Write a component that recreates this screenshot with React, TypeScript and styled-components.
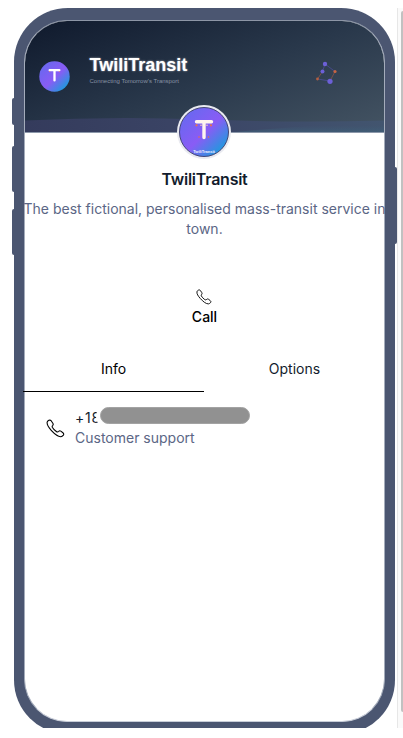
import React from "react";
import styled, { createGlobalStyle } from "styled-components";

const Global = createGlobalStyle`
  * { box-sizing: border-box; }
  body { margin: 0; background: #fff; font-family: Inter, "Liberation Sans", sans-serif; }
`;

const Page = styled.main`
  width: 403px;
  height: 738px;
  padding-top: 8px;
  display: flex;
  align-items: flex-start;
  overflow: hidden;
`;

const Stage = styled.div`
  position: relative;
  width: 397px;
  height: 720px;
  padding-left: 14px;
  flex: none;
  overflow: hidden;
`;

const SideButton = styled.span<{ $side: "left" | "right"; $top: number; $height: number }>`
  position: absolute;
  ${(p) => (p.$side === "left" ? "left: 12px; border-radius: 2px 0 0 2px;" : "right: 0; border-radius: 0 2px 2px 0;")}
  top: ${(p) => p.$top}px;
  width: 3px;
  height: ${(p) => p.$height}px;
  background: #4b5671;
`;

const Phone = styled.section`
  width: 381px;
  height: 726px;
  padding: 12px 10px;
  border-radius: 54px;
  background: #4b5671;
`;

const Screen = styled.div`
  width: 361px;
  height: 702px;
  border: 1px solid #a4acbb;
  border-top-color: #8d96a6;
  border-bottom-color: #c8cdd8;
  border-radius: 43px;
  background: #fff;
`;

const Banner = styled.header`
  position: relative;
  height: 112px;
  padding: 0 47px 0 14px;
  display: flex;
  align-items: flex-start;
  border-radius: 42px 42px 0 0;
  border-bottom: 1px solid #8c98aa;
  background: linear-gradient(160deg, #0f192c 0%, #29384b 52%, #445463 100%);
  overflow: hidden;
`;

const Wave = styled.svg`
  position: absolute;
  left: 0;
  bottom: 0;
`;

const SmallLogo = styled.svg`
  margin-top: 40px;
  flex: none;
`;

const BrandText = styled.div`
  position: relative;
  margin: 33px auto 0 19.5px;
  font-family: "Liberation Sans", Arial, sans-serif;
`;

const BrandName = styled.div`
  color: #fff;
  font-size: 18px;
  line-height: 23px;
  font-weight: 700;
  text-shadow: 0 0 2px rgba(255, 255, 255, 0.65);
`;

const Tagline = styled.div`
  color: #8793a5;
  font-size: 6px;
  line-height: 8px;
  white-space: nowrap;
`;

const Network = styled.svg`
  margin: 40px -1px 0 0;
  flex: none;
`;

const Profile = styled.div`
  position: relative;
  margin: -28px -1px 0;
  display: flex;
  flex-direction: column;
  align-items: center;
`;

const Avatar = styled.div`
  width: 54px;
  height: 54px;
  margin-right: 2px;
  padding: 2px;
  border-radius: 50%;
  background: #e9eaf0;
  svg { display: block; }
`;

const Name = styled.h1`
  margin: 8px 0 0;
  color: #121c2d;
  font-size: 16px;
  line-height: 24px;
  font-weight: 600;
  letter-spacing: -0.25px;
`;

const Description = styled.p`
  width: 364px;
  margin: 8px 0 0;
  color: #5b6685;
  font-size: 14px;
  line-height: 20px;
  text-align: center;
`;

const CallButton = styled.button`
  margin-top: 48px;
  padding: 0;
  display: flex;
  flex-direction: column;
  align-items: center;
  border: 0;
  background: none;
  color: #000;
  font: 500 14px/20px Inter, sans-serif;
`;

const CallIconSlot = styled.span`
  height: 20px;
  margin-right: 1px;
  display: flex;
  align-items: center;
`;

const Tabs = styled.nav`
  margin: 20px -1px 0;
  display: grid;
  grid-template-columns: 181px 181px;
  transform: translateX(-1px);
`;

const Tab = styled.button<{ $active?: boolean }>`
  height: 45px;
  padding: 0 0 1px;
  border: 0;
  border-bottom: 1px solid ${(p) => (p.$active ? "#000" : "transparent")};
  background: none;
  color: ${(p) => (p.$active ? "#000" : "#121c2d")};
  font: 400 14px/20px Inter, sans-serif;
`;

const Contact = styled.div`
  margin-top: 16px;
  padding-left: 20.5px;
  display: flex;
  align-items: center;
  gap: 10.5px;
`;

const ContactText = styled.div`
  font-size: 14px;
  line-height: 20px;
`;

const NumberLine = styled.div`
  height: 20px;
  display: flex;
  align-items: center;
  color: #121c2d;
`;

const Digits = styled.span`
  width: 24.5px;
  letter-spacing: 0.8px;
  white-space: nowrap;
`;

const Redaction = styled.span`
  width: 150px;
  height: 17px;
  margin-top: -5px;
  border: 1px solid #a3a3a3;
  border-radius: 9px;
  background: #919191;
  box-shadow: -1px 1px 0 3px #fff;
  z-index: 1;
`;

const Label = styled.div`
  color: #5b6685;
`;

const ScrollTrack = styled.aside`
  width: 6px;
  height: 720px;
  padding: 3px 0 0 3px;
  border-left: 1px solid #e7e7e7;
  background: #fafafa;
`;

const ScrollThumb = styled.div`
  height: 701px;
  border-radius: 3px 0 0 3px;
  background: #c1c1c1;
`;

function Gradient({ id }: { id: string }) {
  return (
    <linearGradient id={id} x1="0" y1="0" x2="1" y2="1">
      <stop offset="0.12" stopColor="#6968f0" />
      <stop offset="0.52" stopColor="#895cf5" />
      <stop offset="0.9" stopColor="#169fdc" />
    </linearGradient>
  );
}

function Handset({ size }: { size: number }) {
  return (
    <svg width={size} height={size} viewBox="0 0 20 20" fill="none" stroke="#000" strokeWidth="1.15" strokeLinejoin="round">
      <path d="M1.2 3.4C.8 6 2.5 8.7 5.5 12C9 15.8 12.5 18.7 15.6 18.6Q17 18.3 18.3 16.9Q19.2 15.7 17.8 14.5L15.6 12.8Q14.4 11.9 13.4 13Q12.2 14.2 10.9 13.2Q8 11 6.6 8.6Q6.2 7.6 7.2 6.6Q8 5.6 7.2 4.4L5.4 1.8Q4.4.7 3 1.4Q1.5 2.2 1.2 3.4Z" />
    </svg>
  );
}

export default function App() {
  return (
    <>
      <Global />
      <Page>
        <Stage>
          <SideButton $side="left" $top={90} $height={27} />
          <SideButton $side="left" $top={138} $height={46} />
          <SideButton $side="left" $top={201} $height={46} />
          <SideButton $side="right" $top={159} $height={77} />
          <Phone>
            <Screen>
              <Banner>
                <Wave width="359" height="16" viewBox="0 0 359 16">
                  <defs>
                    <linearGradient id="wave">
                      <stop stopColor="#343b5c" />
                      <stop offset="0.5" stopColor="#3b4566" />
                      <stop offset="1" stopColor="#42556f" />
                    </linearGradient>
                    <linearGradient id="shore" x1="0" y1="0" x2="0" y2="1">
                      <stop offset="0.3" stopColor="#3f5f78" stopOpacity="0" />
                      <stop offset="1" stopColor="#3f5f78" stopOpacity="0.7" />
                    </linearGradient>
                  </defs>
                  <path d="M0 4.5Q90 0 180 3.5T359 4.5V16H0Z" fill="url(#wave)" />
                  <path d="M210 16Q290 8 359 7V16Z" fill="url(#shore)" />
                </Wave>
                <SmallLogo width="31" height="31" viewBox="0 0 32 32">
                  <defs><Gradient id="small-logo" /></defs>
                  <circle cx="16" cy="16" r="15.7" fill="url(#small-logo)" />
                  <path d="M11 9.5H21M16 9.5V20" stroke="#fff" strokeWidth="2.4" strokeLinecap="round" />
                  <g fill="#f28a61"><circle cx="11" cy="10.8" r=".6" /><circle cx="21" cy="10.8" r=".6" /></g>
                </SmallLogo>
                <BrandText>
                  <BrandName>TwiliTransit</BrandName>
                  <Tagline>Connecting Tomorrow's Transport</Tagline>
                </BrandText>
                <Network width="22" height="24" viewBox="0 0 22 24">
                  <g fill="none" strokeWidth="1" opacity="0.6">
                    <path d="M9 3L19 10.5M9 3L6.5 10.5M1.5 18L14 20" stroke="#5550b0" />
                    <path d="M6.5 10.5L1.5 18M19 10.5L14 20" stroke="#a45b45" />
                  </g>
                  <g fill="#6c60d7"><circle cx="9" cy="3" r="2.2" /><circle cx="6.5" cy="10.5" r="2" /><circle cx="14" cy="20.3" r="2.6" /></g>
                  <circle cx="19" cy="10.5" r="1.6" fill="#c76543" /><circle cx="1.5" cy="18" r="1.4" fill="#b55f3f" />
                </Network>
              </Banner>
              <Profile>
                <Avatar>
                  <svg width="50" height="50" viewBox="0 0 50 50">
                    <defs><Gradient id="avatar" /></defs>
                    <circle cx="25" cy="25" r="24.5" fill="url(#avatar)" stroke="#454775" strokeWidth="1" />
                    <path d="M17.5 14.8H32.5M25 15V30.5" stroke="#fff5ee" strokeWidth="3.4" strokeLinecap="round" />
                    <g fill="#ef7046"><circle cx="17.5" cy="18.3" r="1.1" /><circle cx="32" cy="18.3" r="1.1" /><circle cx="20" cy="30" r=".8" /><circle cx="29.5" cy="30" r=".8" /></g>
                    <g fill="#ffd0b5"><circle cx="22" cy="18.3" r=".8" /><circle cx="28" cy="18.3" r=".8" /></g>
                    <text x="25" y="45.5" textAnchor="middle" fill="#eef0ff" fontFamily="Liberation Sans" fontWeight="700" fontSize="4">TwiliTransit</text>
                  </svg>
                </Avatar>
                <Name>TwiliTransit</Name>
                <Description>The best fictional, personalised mass-transit service in town.</Description>
                <CallButton><CallIconSlot><Handset size={16} /></CallIconSlot>Call</CallButton>
              </Profile>
              <Tabs>
                <Tab $active>Info</Tab>
                <Tab>Options</Tab>
              </Tabs>
              <Contact>
                <Handset size={19} />
                <ContactText>
                  <NumberLine><Digits>+18</Digits><Redaction /></NumberLine>
                  <Label>Customer support</Label>
                </ContactText>
              </Contact>
            </Screen>
          </Phone>
        </Stage>
        <ScrollTrack><ScrollThumb /></ScrollTrack>
      </Page>
    </>
  );
}
